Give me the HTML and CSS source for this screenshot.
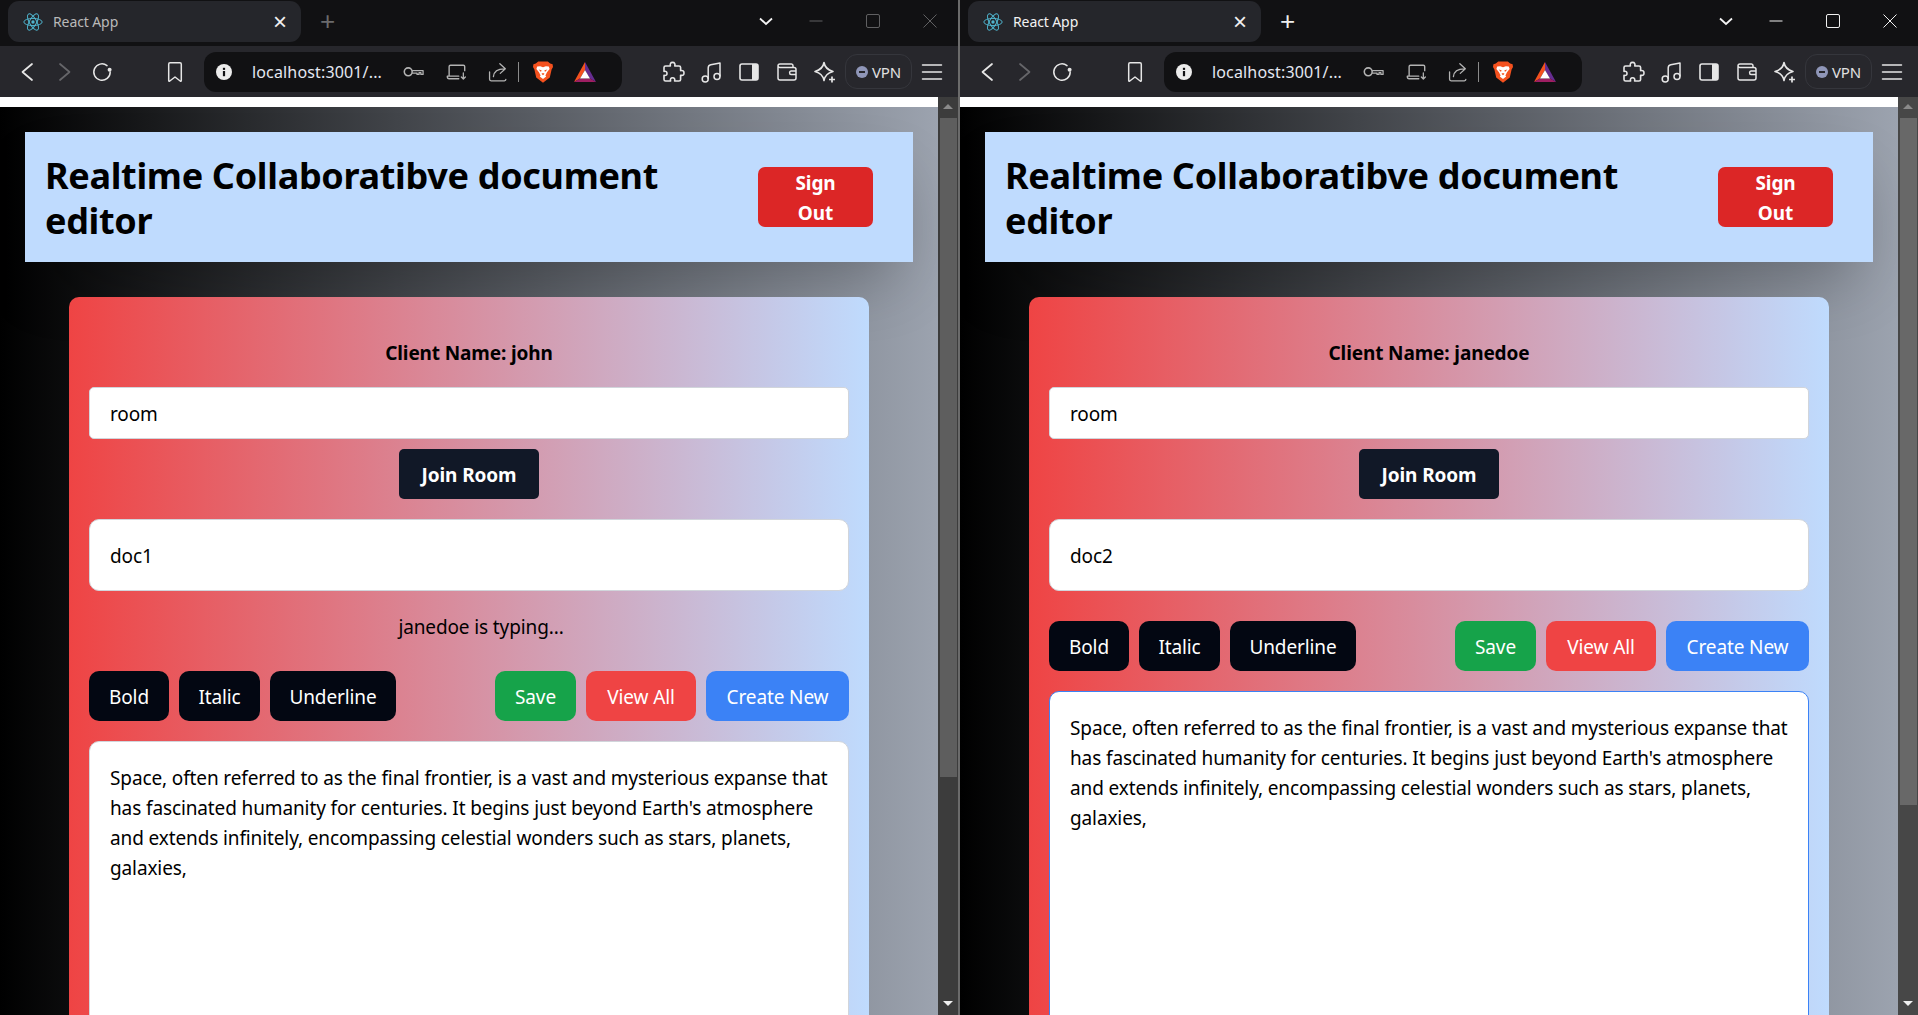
FILE: index.html
```html
<!DOCTYPE html>
<html lang="en">

<head>
    <meta charset="UTF-8">
    <meta name="viewport" content="width=device-width, initial-scale=1.0">
    <title>React App</title>
    <link rel="stylesheet" href="styles.css">
</head>

<body>
    <!-- icons used by both windows -->
    <svg class="iconDefs" width="0" height="0">
        <symbol id="i-react" viewBox="0 0 24 24">
            <g fill="none" stroke="#4fb3cc" stroke-width="1.2">
                <ellipse cx="12" cy="12" rx="11" ry="4.3" />
                <ellipse cx="12" cy="12" rx="11" ry="4.3" transform="rotate(60 12 12)" />
                <ellipse cx="12" cy="12" rx="11" ry="4.3" transform="rotate(120 12 12)" />
            </g>
            <circle cx="12" cy="12" r="2" fill="#4fb3cc" />
        </symbol>
        <symbol id="i-back" viewBox="0 0 24 24">
            <path d="M17 4 L7.5 12 L17 20" fill="none" stroke="currentColor" stroke-width="1.7" stroke-linecap="round" stroke-linejoin="round" />
        </symbol>
        <symbol id="i-forward" viewBox="0 0 24 24">
            <path d="M7 4 L16.5 12 L7 20" fill="none" stroke="currentColor" stroke-width="1.7" stroke-linecap="round" stroke-linejoin="round" />
        </symbol>
        <symbol id="i-reload" viewBox="0 0 24 24">
            <path d="M17 5.6 A8.2 8.2 0 1 0 20.2 12" fill="none" stroke="currentColor" stroke-width="1.5" stroke-linecap="round" />
            <circle cx="19.6" cy="9.8" r="2" fill="currentColor" />
        </symbol>
        <symbol id="i-bookmark" viewBox="0 0 24 24">
            <path d="M7 2.8 H17 Q18.3 2.8 18.3 4.2 V20.6 Q18.3 21.6 17.2 21 L12 17 L6.8 21 Q5.7 21.6 5.7 20.6 V4.2 Q5.7 2.8 7 2.8 Z" fill="none" stroke="currentColor" stroke-width="1.5" stroke-linejoin="round" />
        </symbol>
        <symbol id="i-info" viewBox="0 0 16 16">
            <circle cx="8" cy="8" r="8" fill="#ececec" />
            <rect x="6.9" y="7" width="2.2" height="5.2" fill="#111113" />
            <rect x="6.9" y="3.8" width="2.2" height="2.1" fill="#111113" />
        </symbol>
        <symbol id="i-key" viewBox="0 0 24 24">
            <circle cx="6.8" cy="11.8" r="4.3" fill="none" stroke="currentColor" stroke-width="1.7" />
            <path d="M11 10.4 H23 V14.6 H20.6 V12.6 H18.6 V14.6 H16.4 V13.2 H11" fill="none" stroke="currentColor" stroke-width="1.4" stroke-linejoin="round" />
        </symbol>
        <symbol id="i-laptop" viewBox="0 0 24 24">
            <path d="M4.5 16 V6 Q4.5 4.6 6 4.6 H20 Q21.5 4.6 21.5 6 V10.5 M2.5 17 Q2.5 19.4 4.5 19.4 H15 M2.5 16.5 H15" fill="none" stroke="currentColor" stroke-width="1.5" stroke-linecap="round" />
            <path d="M20 13 V19.5 M17.8 17.4 L20 19.6 L22.2 17.4" fill="none" stroke="currentColor" stroke-width="1.4" stroke-linecap="round" stroke-linejoin="round" />
        </symbol>
        <symbol id="i-share" viewBox="0 0 24 24">
            <path d="M2.8 12 V20 Q2.8 21.6 4.4 21.6 H19 Q20.6 21.6 20.6 20" fill="none" stroke="currentColor" stroke-width="1.4" stroke-linecap="round" />
            <path d="M7 17 C7.5 11.5 11.5 8.5 19 8.5 M14 3 L20 8.5 L14.5 13.5" fill="none" stroke="currentColor" stroke-width="1.4" stroke-linecap="round" stroke-linejoin="round" />
        </symbol>
        <symbol id="i-brave" viewBox="0 0 24 24">
            <path d="M7.2 1.4 H16.8 L19.2 3.6 L21.6 4.2 L22 7 L20.6 9.6 L18.8 17.6 L12 22.8 L5.2 17.6 L3.4 9.6 L2 7 L2.4 4.2 L4.8 3.6 Z" fill="#f4511e" />
            <path d="M6.2 6.6 L9.2 6.2 L12 7.2 L14.8 6.2 L17.8 6.6 L18.6 9 L16 12.2 L14.4 15.6 L15.2 16.6 L12 19 L8.8 16.6 L9.6 15.6 L8 12.2 L5.4 9 Z" fill="#fff" />
            <path d="M7.6 9.4 L10.6 10.2 L10 12 Z M16.4 9.4 L13.4 10.2 L14 12 Z M10.4 13.8 L12 15.2 L13.6 13.8 L12 13 Z" fill="#f4511e" />
        </symbol>
        <symbol id="i-bat" viewBox="0 0 24 24">
            <path d="M12 2 L1 22 L7 18.5 L12 10 Z" fill="#f4511e" />
            <path d="M12 2 L23 22 L17 18.5 L12 10 Z" fill="#662d91" />
            <path d="M1 22 H23 L17 18.5 H7 Z" fill="#9e1f63" />
            <path d="M12 10 L17 18.5 H7 Z" fill="#fff" />
        </symbol>
        <symbol id="i-puzzle" viewBox="0 0 24 24">
            <path d="M9.4 6 Q8.6 2.4 11.6 2.4 Q14.6 2.4 13.8 6 H18 Q19.6 6 19.6 7.6 V10.6 Q23 10 23 13 Q23 16 19.6 15.2 V19.4 Q19.6 21 18 21 H13.6 Q14.4 17.8 11.6 17.8 Q8.8 17.8 9.6 21 H4.6 Q3 21 3 19.4 V15.4 Q6 16 6 13.4 Q6 10.8 3 11.4 V7.6 Q3 6 4.6 6 Z" fill="none" stroke="currentColor" stroke-width="1.6" stroke-linejoin="round" />
        </symbol>
        <symbol id="i-music" viewBox="0 0 24 24">
            <circle cx="6.2" cy="19" r="3" fill="none" stroke="currentColor" stroke-width="1.5" />
            <circle cx="18" cy="16.4" r="3" fill="none" stroke="currentColor" stroke-width="1.5" />
            <path d="M9.2 19 V8 Q9.2 5.4 11.8 4.8 L21 3 V16.4" fill="none" stroke="currentColor" stroke-width="1.5" stroke-linejoin="round" />
        </symbol>
        <symbol id="i-sidebar" viewBox="0 0 24 24">
            <rect x="3" y="4" width="18" height="16" rx="2" fill="none" stroke="currentColor" stroke-width="1.6" />
            <path d="M15 4 H19 Q21 4 21 6 V18 Q21 20 19 20 H15 Z" fill="currentColor" />
        </symbol>
        <symbol id="i-wallet" viewBox="0 0 24 24">
            <path d="M3 6.6 V18 Q3 20 5 20 H19 Q21 20 21 18 V9.4 Q21 7.4 19 7.4 H5 Q3 7.4 3 5.8 Q3 4 5 4 H16.5 Q18 4 18 5.8 V7.4" fill="none" stroke="currentColor" stroke-width="1.5" stroke-linejoin="round" />
            <path d="M21 11 H16 Q14.6 11 14.6 12.8 Q14.6 14.6 16 14.6 H21" fill="none" stroke="currentColor" stroke-width="1.5" />
        </symbol>
        <symbol id="i-sparkle" viewBox="0 0 24 24">
            <path d="M11 2.5 C11.8 7.5 14.6 10 20 11.5 C14.6 13 11.8 15.5 11 20.5 C10.2 15.5 7.4 13 2 11.5 C7.4 10 10.2 7.5 11 2.5 Z" fill="none" stroke="currentColor" stroke-width="1.6" stroke-linejoin="round" />
            <path d="M19 16.5 V22.5 M16 19.5 H22" fill="none" stroke="currentColor" stroke-width="1.7" />
        </symbol>
        <symbol id="i-menu" viewBox="0 0 24 24">
            <path d="M2.5 5 H21.5 M2.5 12 H21.5 M2.5 19 H21.5" fill="none" stroke="currentColor" stroke-width="1.5" stroke-linecap="round" />
        </symbol>
    </svg>

    <div class="desktop">
        <!-- john -->
        <section class="window inactive">
            <div class="titlebar">
                <div class="tab">
                    <svg class="favicon"><use href="#i-react" /></svg>
                    <span class="tabTitle">React App</span>
                    <span class="tabClose">×</span>
                </div>
                <span class="newTab">+</span>
                <div class="winControls">
                    <span class="winBtn chevron"><svg width="14" height="9" viewBox="0 0 14 9"><path d="M1 1.5 L7 7 L13 1.5" fill="none" stroke="currentColor" stroke-width="1.8" /></svg></span>
                    <span class="winBtn dimmable"><svg width="14" height="14" viewBox="0 0 14 14"><path d="M0.5 7 H13.5" stroke="currentColor" stroke-width="1" /></svg></span>
                    <span class="winBtn dimmable"><svg width="14" height="14" viewBox="0 0 14 14"><rect x="0.5" y="0.5" width="13" height="13" rx="1.5" fill="none" stroke="currentColor" stroke-width="1" /></svg></span>
                    <span class="winBtn dimmable"><svg width="14" height="14" viewBox="0 0 14 14"><path d="M0.5 0.5 L13.5 13.5 M13.5 0.5 L0.5 13.5" stroke="currentColor" stroke-width="1" /></svg></span>
                </div>
            </div>
            <div class="toolbar">
                <svg class="navIcon back"><use href="#i-back" /></svg>
                <svg class="navIcon forward"><use href="#i-forward" /></svg>
                <svg class="navIcon reload"><use href="#i-reload" /></svg>
                <svg class="navIcon bookmark"><use href="#i-bookmark" /></svg>
                <div class="urlBar">
                    <svg class="infoIcon"><use href="#i-info" /></svg>
                    <span class="urlText">localhost:3001/...</span>
                    <svg class="urlIcon key"><use href="#i-key" /></svg>
                    <svg class="urlIcon laptop"><use href="#i-laptop" /></svg>
                    <svg class="urlIcon share"><use href="#i-share" /></svg>
                    <span class="urlSep"></span>
                    <svg class="urlIcon brave"><use href="#i-brave" /></svg>
                    <svg class="urlIcon bat"><use href="#i-bat" /></svg>
                </div>
                <svg class="extIcon first"><use href="#i-puzzle" /></svg>
                <svg class="extIcon"><use href="#i-music" /></svg>
                <svg class="extIcon"><use href="#i-sidebar" /></svg>
                <svg class="extIcon"><use href="#i-wallet" /></svg>
                <svg class="extIcon"><use href="#i-sparkle" /></svg>
                <div class="vpn"><span class="vpnDot"></span>VPN</div>
                <svg class="menuIcon"><use href="#i-menu" /></svg>
            </div>
            <div class="viewport">
                <div class="page">
                    <div class="strip"></div>
                    <header class="appHeader">
                        <h1>Realtime Collaboratibve document<br>editor</h1>
                        <button class="signOut">Sign<br>Out</button>
                    </header>
                    <main class="card">
                        <p class="clientName">Client Name: john</p>
                        <input class="roomInput" type="text" value="room">
                        <button class="joinBtn">Join Room</button>
                        <input class="docInput" type="text" value="doc1">
                        <p class="typing">janedoe is typing...</p>
                        <div class="actions">
                            <button class="btn dark boldBtn">Bold</button>
                            <button class="btn dark italicBtn">Italic</button>
                            <button class="btn dark underlineBtn">Underline</button>
                            <button class="btn green saveBtn">Save</button>
                            <button class="btn red viewBtn">View All</button>
                            <button class="btn blue createBtn">Create New</button>
                        </div>
                        <div class="editor">Space, often referred to as the final frontier, is a vast and mysterious expanse that<br>has fascinated humanity for centuries. It begins just beyond Earth's atmosphere<br>and extends infinitely, encompassing celestial wonders such as stars, planets,<br>galaxies,</div>
                    </main>
                </div>
                <div class="scrollbar">
                    <span class="arrowUp"></span>
                    <span class="thumb"></span>
                    <span class="arrowDown"></span>
                </div>
            </div>
        </section>

        <!-- janedoe -->
        <section class="window">
            <div class="titlebar">
                <div class="tab">
                    <svg class="favicon"><use href="#i-react" /></svg>
                    <span class="tabTitle">React App</span>
                    <span class="tabClose">×</span>
                </div>
                <span class="newTab">+</span>
                <div class="winControls">
                    <span class="winBtn chevron"><svg width="14" height="9" viewBox="0 0 14 9"><path d="M1 1.5 L7 7 L13 1.5" fill="none" stroke="currentColor" stroke-width="1.8" /></svg></span>
                    <span class="winBtn dimmable"><svg width="14" height="14" viewBox="0 0 14 14"><path d="M0.5 7 H13.5" stroke="currentColor" stroke-width="1" /></svg></span>
                    <span class="winBtn dimmable"><svg width="14" height="14" viewBox="0 0 14 14"><rect x="0.5" y="0.5" width="13" height="13" rx="1.5" fill="none" stroke="currentColor" stroke-width="1" /></svg></span>
                    <span class="winBtn dimmable"><svg width="14" height="14" viewBox="0 0 14 14"><path d="M0.5 0.5 L13.5 13.5 M13.5 0.5 L0.5 13.5" stroke="currentColor" stroke-width="1" /></svg></span>
                </div>
            </div>
            <div class="toolbar">
                <svg class="navIcon back"><use href="#i-back" /></svg>
                <svg class="navIcon forward"><use href="#i-forward" /></svg>
                <svg class="navIcon reload"><use href="#i-reload" /></svg>
                <svg class="navIcon bookmark"><use href="#i-bookmark" /></svg>
                <div class="urlBar">
                    <svg class="infoIcon"><use href="#i-info" /></svg>
                    <span class="urlText">localhost:3001/...</span>
                    <svg class="urlIcon key"><use href="#i-key" /></svg>
                    <svg class="urlIcon laptop"><use href="#i-laptop" /></svg>
                    <svg class="urlIcon share"><use href="#i-share" /></svg>
                    <span class="urlSep"></span>
                    <svg class="urlIcon brave"><use href="#i-brave" /></svg>
                    <svg class="urlIcon bat"><use href="#i-bat" /></svg>
                </div>
                <svg class="extIcon first"><use href="#i-puzzle" /></svg>
                <svg class="extIcon"><use href="#i-music" /></svg>
                <svg class="extIcon"><use href="#i-sidebar" /></svg>
                <svg class="extIcon"><use href="#i-wallet" /></svg>
                <svg class="extIcon"><use href="#i-sparkle" /></svg>
                <div class="vpn"><span class="vpnDot"></span>VPN</div>
                <svg class="menuIcon"><use href="#i-menu" /></svg>
            </div>
            <div class="viewport">
                <div class="page">
                    <div class="strip"></div>
                    <header class="appHeader">
                        <h1>Realtime Collaboratibve document<br>editor</h1>
                        <button class="signOut">Sign<br>Out</button>
                    </header>
                    <main class="card">
                        <p class="clientName">Client Name: janedoe</p>
                        <input class="roomInput" type="text" value="room">
                        <button class="joinBtn">Join Room</button>
                        <input class="docInput" type="text" value="doc2">
                        <div class="actions">
                            <button class="btn dark boldBtn">Bold</button>
                            <button class="btn dark italicBtn">Italic</button>
                            <button class="btn dark underlineBtn">Underline</button>
                            <button class="btn green saveBtn">Save</button>
                            <button class="btn red viewBtn">View All</button>
                            <button class="btn blue createBtn">Create New</button>
                        </div>
                        <div class="editor focused">Space, often referred to as the final frontier, is a vast and mysterious expanse that<br>has fascinated humanity for centuries. It begins just beyond Earth's atmosphere<br>and extends infinitely, encompassing celestial wonders such as stars, planets,<br>galaxies,</div>
                    </main>
                </div>
                <div class="scrollbar">
                    <span class="arrowUp"></span>
                    <span class="thumb"></span>
                    <span class="arrowDown"></span>
                </div>
            </div>
        </section>
    </div>
</body>

</html>
```

FILE: styles.css
```css
* {
    padding: 0;
    margin: 0;
    box-sizing: border-box;
}

body {
    width: 1918px;
    height: 1015px;
    overflow: hidden;
    background: #000;
    font-family: "Noto Sans", "Open Sans", sans-serif;
    font-size: 19px;
    line-height: 30px;
    letter-spacing: -0.12px;
    color: #000;
}

.iconDefs {
    display: block;
    height: 0;
}

.desktop {
    display: flex;
    height: 1015px;
}

.window {
    width: 958px;
    height: 1015px;
    display: flex;
    flex-direction: column;
    flex: none;
    color: #e8e8e8;
}

.window.inactive {
    width: 960px;
    border-right: 2px solid #6b6b6b;
}

/* title bar */
.titlebar {
    height: 46px;
    background: #111113;
    display: flex;
    align-items: flex-start;
    flex: none;
}

.tab {
    width: 293px;
    height: 41px;
    margin: 1px 0 0 8px;
    background: #25262b;
    border-radius: 11px;
    display: flex;
    align-items: center;
    padding-left: 15px;
    flex: none;
}

.favicon {
    width: 20px;
    height: 20px;
}

.tabTitle {
    width: 220px;
    margin-left: 10px;
    font-family: "Noto Sans", sans-serif;
    font-size: 14px;
    letter-spacing: -0.1px;
    color: #f2f2f2;
}

.tabClose {
    font-family: "Liberation Sans", sans-serif;
    font-size: 24px;
    color: #f0f0f0;
    line-height: 24px;
}

.newTab {
    margin: 6px 0 0 19px;
    font-family: "Liberation Sans", sans-serif;
    font-size: 26px;
    line-height: 30px;
    color: #eee;
    letter-spacing: 0;
}

.inactive .tabTitle {
    color: #b9b9b9;
}

.inactive .newTab {
    color: #6b6b6d;
}

.winControls {
    margin-left: auto;
    display: flex;
    height: 42px;
}

.winBtn {
    width: 57px;
    display: flex;
    align-items: center;
    justify-content: center;
    color: #f0f0f0;
}

.winBtn.chevron {
    width: 43px;
    color: #f5f5f5;
}

.inactive .winBtn.dimmable {
    color: #606062;
}

/* toolbar */
.toolbar {
    height: 51px;
    background: #27272c;
    display: flex;
    align-items: center;
    flex: none;
}

.navIcon {
    width: 24px;
    height: 24px;
    flex: none;
    color: #e6e6e6;
}

.navIcon.back {
    margin-left: 15px;
}

.navIcon.forward {
    margin-left: 14px;
    color: #66666a;
}

.navIcon.reload {
    margin-left: 13px;
}

.navIcon.bookmark {
    margin-left: 49px;
}

.urlBar {
    width: 418px;
    height: 40px;
    margin-left: 17px;
    background: #111113;
    border-radius: 12px;
    display: flex;
    align-items: center;
    flex: none;
}

.infoIcon {
    width: 16px;
    height: 16px;
    margin-left: 12px;
    flex: none;
}

.urlText {
    width: 135px;
    margin-left: 20px;
    font-size: 16px;
    letter-spacing: 0.15px;
    color: #e4e8f2;
    white-space: nowrap;
    flex: none;
}

.urlIcon {
    width: 22px;
    height: 22px;
    flex: none;
    color: #b3b3b3;
}

.urlIcon.key {
    margin-left: 15px;
}

.urlIcon.laptop {
    margin-left: 21px;
}

.urlIcon.share {
    margin-left: 20px;
}

.urlSep {
    width: 1px;
    height: 20px;
    margin-left: 9px;
    background: #8b8b8b;
    flex: none;
}

.urlIcon.brave {
    width: 24px;
    height: 24px;
    margin-left: 12px;
}

.urlIcon.bat {
    width: 24px;
    height: 24px;
    margin-left: 18px;
}

.extIcon {
    width: 24px;
    height: 24px;
    margin-left: 14px;
    flex: none;
    color: #e6e6e6;
}

.extIcon.first {
    margin-left: 39px;
}

.vpn {
    width: 67px;
    height: 35px;
    margin-left: 8px;
    border: 1px solid #35363c;
    border-radius: 12px;
    display: flex;
    align-items: center;
    padding-left: 10px;
    font-size: 15px;
    letter-spacing: -0.2px;
    color: #e0e0e0;
    flex: none;
}

.vpnDot {
    width: 12px;
    height: 12px;
    border-radius: 50%;
    background: linear-gradient(#27272c, #27272c) center / 6px 2px no-repeat, #8f96b8;
    margin-right: 4px;
}

.menuIcon {
    width: 24px;
    height: 24px;
    margin-left: 8px;
    flex: none;
    color: #e6e6e6;
}

/* page */
.viewport {
    flex: 1;
    display: flex;
    overflow: hidden;
}

.page {
    width: 938px;
    flex: none;
    overflow: hidden;
    color: #000;
    background: linear-gradient(to right, #000, #9ca3af);
}

.strip {
    height: 10px;
    background: #fff;
}

.appHeader {
    margin: 25px 25px 35px;
    height: 130px;
    padding: 0 40px 0 20px;
    background: #bfdbfe;
    display: flex;
    align-items: center;
    justify-content: space-between;
    box-shadow: 0 31px 62px -15px rgba(0, 0, 0, 0.25);
}

h1 {
    padding-top: 2px;
    font-size: 36px;
    line-height: 45px;
    font-weight: 700;
    letter-spacing: -0.32px;
}

.signOut {
    width: 115px;
    height: 60px;
    padding-top: 1px;
    background: #dc2626;
    color: #fff;
    border: none;
    border-radius: 7px;
    font: inherit;
    font-weight: 700;
    letter-spacing: inherit;
}

.card {
    width: 800px;
    height: 900px;
    margin: 0 auto;
    padding: 41px 20px 0;
    border-radius: 10px 10px 0 0;
    background: linear-gradient(to right, #ef4444, #bfdbfe);
    display: flex;
    flex-direction: column;
}

.clientName {
    text-align: center;
    font-weight: 700;
    margin-bottom: 19px;
}

input {
    width: 100%;
    border: 1px solid #d1d5db;
    background: #fff;
    padding: 1px 20px 0;
    font: inherit;
    letter-spacing: inherit;
    color: #000;
    flex: none;
}

.roomInput {
    height: 52px;
    border-radius: 5px;
}

.joinBtn {
    width: 140px;
    height: 50px;
    margin: 10px auto 20px;
    padding-top: 1px;
    background: #111827;
    color: #fff;
    border: none;
    border-radius: 5px;
    font: inherit;
    font-weight: 700;
    letter-spacing: inherit;
    flex: none;
}

.docInput {
    height: 72px;
    border-radius: 10px;
}

/* sits a little right of centre in the app */
.typing {
    margin-top: 21px;
    padding-left: 24px;
    text-align: center;
}

.actions {
    margin-top: 30px;
    display: flex;
    gap: 10px;
    flex: none;
}

.typing + .actions {
    margin-top: 29px;
}

.btn {
    height: 50px;
    padding-top: 1px;
    border: none;
    border-radius: 10px;
    color: #fff;
    font: inherit;
    letter-spacing: inherit;
    flex: none;
}

.btn.dark {
    background: #030712;
}

.btn.green {
    background: #16a34a;
}

.btn.red {
    background: #ef4444;
}

.btn.blue {
    background: #3b82f6;
}

.boldBtn {
    width: 80px;
}

.italicBtn {
    width: 81px;
}

.underlineBtn {
    width: 126px;
}

.saveBtn {
    width: 81px;
    margin-left: auto;
}

.viewBtn {
    width: 110px;
}

.createBtn {
    width: 143px;
}

.editor {
    margin-top: 20px;
    height: 600px;
    padding: 21px 20px 20px;
    background: #fff;
    border: 1px solid #d1d5db;
    border-radius: 10px;
    white-space: nowrap;
    flex: none;
}

.editor.focused {
    border-color: #3b82f6;
}

/* browser scrollbar */
.scrollbar {
    width: 20px;
    flex: none;
    background: #474747;
    display: flex;
    flex-direction: column;
    align-items: center;
}

.inactive .scrollbar {
    background: #3c3c3c;
}

.arrowUp {
    height: 21px;
    width: 100%;
    flex: none;
    display: block;
}

.arrowUp::after,
.arrowDown::after {
    content: "";
    display: block;
    width: 0;
    height: 0;
    margin: 7px auto 0;
    border-left: 5px solid transparent;
    border-right: 5px solid transparent;
}

.arrowUp::after {
    border-bottom: 5px solid #8a8a8a;
}

.arrowDown::after {
    border-top: 5px solid #f0f0f0;
}

.thumb {
    width: 17px;
    height: 687px;
    flex: none;
    background: #686868;
}

.inactive .thumb {
    height: 659px;
    background: #5e5e5e;
}

.arrowDown {
    margin-top: auto;
    height: 21px;
    width: 100%;
    flex: none;
    display: block;
}
```
